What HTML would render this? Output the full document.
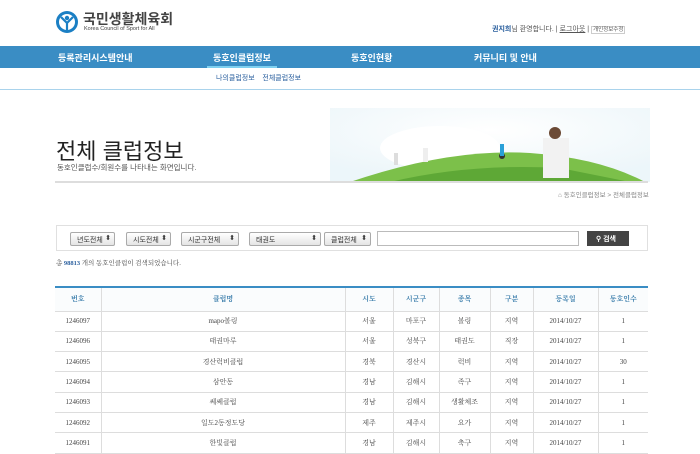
<!DOCTYPE html>
<html><head><meta charset="utf-8"><style>
*{margin:0;padding:0;box-sizing:border-box}
body{width:700px;height:442px;overflow:hidden;background:#fff;font-family:"Liberation Sans","Noto Sans CJK KR",sans-serif;position:relative;color:#333}
.a{position:absolute;white-space:nowrap}
.nav{left:0;top:46px;width:700px;height:22px;background:#3a8dc4}
.nav span{position:absolute;top:5px;color:#fff;font-size:9px;font-weight:bold}
.sel{position:absolute;top:6px;height:14px;border:1px solid #aaa;border-radius:2px;background:linear-gradient(#fff,#e4e4e4);font-size:7px;padding:2px 0 0 6px;color:#333}
.sel:after{content:"⬍";position:absolute;right:3px;top:1px;font-size:7px}
table{position:absolute;left:55px;top:286px;width:593px;border-collapse:collapse;border-top:2px solid #3a8dc4;font-family:"Liberation Serif","Noto Serif CJK SC",serif}
td,th{border-bottom:1px solid #ddd;border-left:1px solid #ddd;text-align:center;font-size:7px;height:20.3px;color:#444;font-weight:normal}
th{height:24px;color:#3a7dab;font-weight:bold;background:#fafcfd}
td:first-child,th:first-child{border-left:none}
</style></head><body>
<svg class="a" style="left:55px;top:10px" width="24" height="24" viewBox="0 0 24 24"><circle cx="12" cy="12" r="11" fill="#1b7fc4"/><circle cx="12" cy="12" r="8" fill="#fff"/><circle cx="12" cy="8" r="2.2" fill="#1b7fc4"/><path d="M6 7 L12 13 L18 7 M12 13 V20" stroke="#1b7fc4" stroke-width="2.2" fill="none"/></svg>
<div class="a" style="left:83px;top:9px;font-size:14px;font-weight:bold;color:#444">국민생활체육회</div>
<div class="a" style="left:84px;top:26px;font-size:5.5px;color:#444">Korea Council of Sport for All</div>
<div class="a" style="left:492px;top:24px;font-size:7px;color:#555"><b style="color:#2a5f9e">권지희</b>님 환영합니다. | <u>로그아웃</u> | <span style="border:1px solid #ccc;font-size:5.5px;padding:0 1px">개인정보수정</span></div>
<div class="a nav"><span style="left:58px">등록관리시스템안내</span><span style="left:213px">동호인클럽정보</span><span style="left:351px">동호인현황</span><span style="left:474px">커뮤니티 및 안내</span><div style="position:absolute;left:207px;top:20px;width:70px;height:2px;background:#7fd0f0"></div></div>
<div class="a" style="left:216px;top:73px;font-size:7px;color:#2a5f9e">나의클럽정보 &nbsp;&nbsp; 전체클럽정보</div>
<div class="a" style="left:0;top:89px;width:700px;height:1px;background:#a9d3ec"></div>
<svg class="a" style="left:330px;top:108px" width="320" height="74" viewBox="0 0 320 74"><defs><radialGradient id="s" cx="0.5" cy="0.3" r="0.7"><stop offset="0" stop-color="#fff"/><stop offset="1" stop-color="#d9ecf4"/></radialGradient></defs><rect width="320" height="74" fill="url(#s)" opacity=".5"/><ellipse cx="110" cy="40" rx="60" ry="22" fill="#fff"/><path d="M20 74 Q120 40 200 45 Q270 50 315 74Z" fill="#7cc04a"/><path d="M60 74 Q140 55 230 60 L300 74Z" fill="#5ea836"/><rect x="213" y="30" width="26" height="40" fill="#f2f2f2"/><circle cx="225" cy="25" r="6" fill="#6b4a35"/><circle cx="172" cy="48" r="3" fill="#333"/><rect x="170" y="36" width="4" height="12" fill="#2aa0d8"/><rect x="93" y="40" width="5" height="14" fill="#eee"/><rect x="64" y="45" width="4" height="12" fill="#ddd"/></svg>
<div class="a" style="left:56px;top:134px;font-size:22px;color:#222">전체 클럽정보</div>
<div class="a" style="left:57px;top:162px;font-size:7.5px;color:#555">동호인클럽수/회원수를 나타내는 화면입니다.</div>
<div class="a" style="left:55px;top:181px;width:593px;height:2px;background:#ddd"></div>
<div class="a" style="left:558px;top:189px;font-size:6.5px;color:#888">⌂ 동호인클럽정보 &gt; 전체클럽정보</div>
<div class="a" style="left:56px;top:225px;width:592px;height:26px;border:1px solid #e0e0e0">
<div class="sel" style="left:13px;width:45px">년도전체</div>
<div class="sel" style="left:69px;width:45px">시도전체</div>
<div class="sel" style="left:124px;width:58px">시군구전체</div>
<div class="sel" style="left:192px;width:72px">태권도</div>
<div class="sel" style="left:267px;width:47px">클럽전체</div>
<div style="position:absolute;left:320px;top:5px;width:202px;height:15px;border:1px solid #bbb"></div>
<div style="position:absolute;left:530px;top:5px;width:42px;height:15px;background:#444;color:#fff;font-size:7px;padding:3px 0 0 9px;font-weight:bold">⚲ 검색</div>
</div>
<div class="a" style="left:56px;top:258px;font-size:6.5px;color:#444;font-family:'Liberation Serif','Noto Serif CJK SC',serif">총 <b style="color:#2a5f9e">98813</b> 개의 동호인클럽이 검색되었습니다.</div>
<table>
<tr><th style="width:46px">번호</th><th style="width:244px">클럽명</th><th style="width:48px">시도</th><th style="width:46px">시군구</th><th style="width:51px">종목</th><th style="width:43px">구분</th><th style="width:65px">등록일</th><th>동호인수</th></tr>
<tr><td>1246097</td><td>mapo볼링</td><td>서울</td><td>마포구</td><td>볼링</td><td>지역</td><td>2014/10/27</td><td>1</td></tr>
<tr><td>1246096</td><td>태권마루</td><td>서울</td><td>성북구</td><td>태권도</td><td>직장</td><td>2014/10/27</td><td>1</td></tr>
<tr><td>1246095</td><td>경산럭비클럽</td><td>경북</td><td>경산시</td><td>럭비</td><td>지역</td><td>2014/10/27</td><td>30</td></tr>
<tr><td>1246094</td><td>삼안동</td><td>경남</td><td>김해시</td><td>족구</td><td>지역</td><td>2014/10/27</td><td>1</td></tr>
<tr><td>1246093</td><td>쎄쎄클럽</td><td>경남</td><td>김해시</td><td>생활체조</td><td>지역</td><td>2014/10/27</td><td>1</td></tr>
<tr><td>1246092</td><td>일도2동정도당</td><td>제주</td><td>제주시</td><td>요가</td><td>지역</td><td>2014/10/27</td><td>1</td></tr>
<tr><td>1246091</td><td>한빛클럽</td><td>경남</td><td>김해시</td><td>축구</td><td>지역</td><td>2014/10/27</td><td>1</td></tr>
</table>
</body></html>
